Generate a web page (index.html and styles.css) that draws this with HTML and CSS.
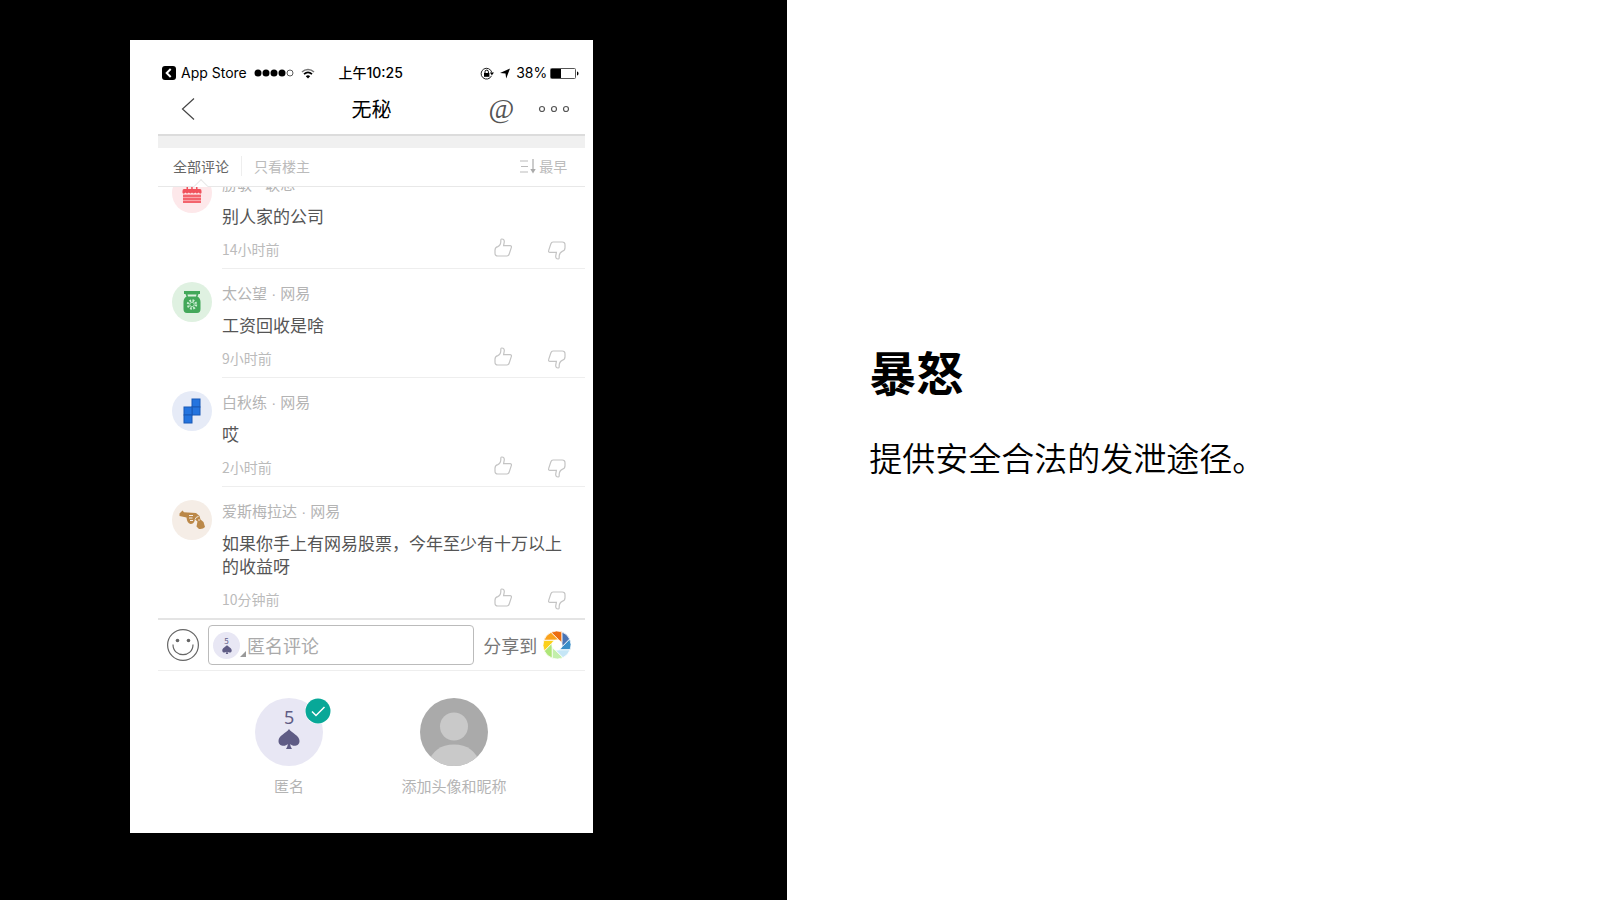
FILE: index.html
```html
<!DOCTYPE html>
<html lang="zh-CN">
<head>
    <meta charset="UTF-8">
    <meta name="viewport" content="width=device-width, initial-scale=1.0">
    <title>暴怒</title>
    <link rel="stylesheet" href="styles.css">
</head>
<body>

<!-- Shared icons -->
<svg class="sprite" aria-hidden="true">
    <symbol id="thumb" viewBox="0 0 18 19">
        <path d="M7.6 1C9.6.8 10.6 2.4 10.2 4.4L9.6 7.6H16C17.4 7.6 17.7 8.6 17.3 9.6L15.2 16C14.7 17.5 14.2 18 13 18H3.8C2 18 1 17 1 15.2V12.2C1 10.2 2.2 9 3.8 8.6C6 7.5 7 5.4 6.8 2.4C6.8 1.5 7 1.1 7.6 1Z" fill="none" stroke="currentColor" stroke-width="1.2"/>
    </symbol>
    <symbol id="spade" viewBox="0 0 22 20">
        <path d="M11 0C13.5 4 21.5 6.5 21.5 12C21.5 17.5 14.5 18 12.3 15C12.3 17 13 18.5 14 20H8C9 18.5 9.7 17 9.7 15C7.5 18 .5 17.5 .5 12C.5 6.5 8.5 4 11 0Z" fill="currentColor"/>
    </symbol>
</svg>

<div class="slide">
    <div class="stage">
        <div class="phone">

            <!-- Status bar -->
            <div class="status">
                <div class="status-left">
                    <svg width="14" height="14" viewBox="0 0 14 14"><rect width="14" height="14" rx="3"/><path d="M8.7 3L4.7 7L8.7 11" fill="none" stroke="#fff" stroke-width="2"/></svg>
                    <span class="store">App Store</span>
                    <svg width="40" height="8" viewBox="0 0 40 8"><circle cx="4" cy="4" r="3.5"/><circle cx="12" cy="4" r="3.5"/><circle cx="20" cy="4" r="3.5"/><circle cx="28" cy="4" r="3.5"/><circle cx="36" cy="4" r="3" fill="none" stroke="#333" stroke-width=".8"/></svg>
                    <svg width="14" height="11" viewBox="0 0 14 11"><path d="M1 4C4.5 .6 9.5 .6 13 4" fill="none" stroke="#777" stroke-width="1.5"/><path d="M3 6.2C5.5 4 8.5 4 11 6.2" fill="none" stroke="#000" stroke-width="1.7"/><path d="M4.8 8.2C6.2 7 7.8 7 9.2 8.2L7 10.5Z"/></svg>
                </div>
                <span class="clock">上午10:25</span>
                <div class="status-right">
                    <svg width="14" height="13" viewBox="0 0 14 13"><path d="M11.5 8.8A5.4 5.4 0 1 1 11.8 5.5" fill="none" stroke="#222" stroke-width="1"/><path d="M9.8 5.5H14L11.9 8.2Z"/><rect x="4" y="6" width="5.4" height="3.8"/><path d="M5 6V4.8A1.7 1.7 0 0 1 8.4 4.8V6" fill="none" stroke="#000"/></svg>
                    <svg width="10" height="11" viewBox="0 0 10 11"><path d="M10 .5L6.2 10.5L5.5 5.5L0 5Z"/></svg>
                    <span class="battery">38%
                        <svg width="29" height="11" viewBox="0 0 29 11"><rect x=".5" y=".5" width="25" height="10" rx="1" fill="none" stroke="#555"/><rect x="1" y="1" width="10" height="9"/><path d="M27 3.5C29 4 29 7 27 7.5Z"/></svg>
                    </span>
                </div>
            </div>

            <!-- Title bar -->
            <div class="nav">
                <button class="back" aria-label="返回">
                    <svg width="14" height="22" viewBox="0 0 14 22"><path d="M13 .5L1.5 11L13 21.5" fill="none" stroke="#444" stroke-width="1.2"/></svg>
                </button>
                <h2>无秘</h2>
                <div class="nav-right">
                    <button class="at">@</button>
                    <button aria-label="更多">
                        <svg width="32" height="8" viewBox="0 0 32 8"><g fill="none" stroke="#555" stroke-width="1.2"><circle cx="4" cy="4" r="2.5"/><circle cx="16" cy="4" r="2.5"/><circle cx="28" cy="4" r="2.5"/></g></svg>
                    </button>
                </div>
            </div>

            <!-- Tabs -->
            <div class="tabs">
                <button class="tab active">全部评论</button>
                <button class="tab">只看楼主</button>
                <button class="sort">
                    <svg width="16" height="15" viewBox="0 0 16 15"><path d="M0 2H8M1 7.5H8M0 13H8" fill="none" stroke="#bbb"/><path d="M13 0V11" fill="none" stroke="#aaa" stroke-width="1.2"/><path d="M10.3 10H15.7L13 14.5Z" fill="#aaa"/></svg>
                    最早
                </button>
            </div>

            <!-- Comments, scrolled to the newest -->
            <div class="comments">
                <div class="comment">
                    <div class="avatar pink">
                        <svg width="20" height="22" viewBox="0 0 20 22"><path d="M4.5 3H6V8H4.5ZM9.2 3H10.7V8H9.2ZM14 3H15.5V8H14Z" fill="#f0525c"/><path d="M2 7H18Q19.5 7 19.5 9V11Q18 12.5 16.5 10.5Q15 12.5 13.2 10.5Q11.5 12.5 10 10.5Q8.5 12.5 6.8 10.5Q5 12.5 3.5 10.5Q2 12.5 .5 11V9Q.5 7 2 7Z" fill="#f0525c"/><path d="M1 12.5H19V21H1Z" fill="#f3646d"/><path d="M1 12.5H19M1 15.5H19M1 18.5H19" stroke="#fbb5b9" stroke-width=".8"/></svg>
                    </div>
                    <div class="comment-body">
                        <div class="name">勝敏 · 联想</div>
                        <p>别人家的公司</p>
                        <div class="meta">
                            <span>14小时前</span>
                            <button aria-label="赞"><svg width="18" height="19"><use href="#thumb"/></svg></button>
                            <button class="down" aria-label="踩"><svg width="18" height="19"><use href="#thumb"/></svg></button>
                        </div>
                    </div>
                </div>
                <div class="comment">
                    <div class="avatar green">
                        <svg width="18" height="24" viewBox="0 0 18 24"><path d="M1 1H17V4H15.5L14.5 6.5Q17.5 8 17.5 12V19Q17.5 23 14 23H4Q.5 23 .5 19V12Q.5 8 3.5 6.5L2.5 4H1Z" fill="#43a85a"/><path d="M4.5 4.5H13.5L13 6.5H5Z" fill="#dff1e1"/><circle cx="9" cy="14.5" r="4" fill="none" stroke="#c8ecd0" stroke-width="2.4" stroke-dasharray="1.8 1.34"/><circle cx="9" cy="14.5" r="2.2" fill="none" stroke="#c8ecd0" stroke-width=".8"/></svg>
                    </div>
                    <div class="comment-body">
                        <div class="name">太公望 · 网易</div>
                        <p>工资回收是啥</p>
                        <div class="meta">
                            <span>9小时前</span>
                            <button aria-label="赞"><svg width="18" height="19"><use href="#thumb"/></svg></button>
                            <button class="down" aria-label="踩"><svg width="18" height="19"><use href="#thumb"/></svg></button>
                        </div>
                    </div>
                </div>
                <div class="comment">
                    <div class="avatar blue">
                        <svg width="18" height="26" viewBox="0 0 18 26"><g fill="#2474df" stroke="#1959b5"><rect x="9" y="1" width="8" height="8"/><rect x="9" y="9" width="8" height="8"/><rect x="1" y="9" width="8" height="8"/><rect x="1" y="17" width="8" height="8"/></g></svg>
                    </div>
                    <div class="comment-body">
                        <div class="name">白秋练 · 网易</div>
                        <p>哎</p>
                        <div class="meta">
                            <span>2小时前</span>
                            <button aria-label="赞"><svg width="18" height="19"><use href="#thumb"/></svg></button>
                            <button class="down" aria-label="踩"><svg width="18" height="19"><use href="#thumb"/></svg></button>
                        </div>
                    </div>
                </div>
                <div class="comment">
                    <div class="avatar tan">
                        <svg width="26" height="20" viewBox="0 0 26 20"><path d="M2 2L3.5 .5L5 2.3L17 3L20.5 6L21.5 9.5L24.5 12L26 17Q24 19.5 20 19L17.5 16.5L18.5 11.5L16 9.5Q15 14 11.5 14Q8 13 7.5 7.5L.5 6V3.5Z" fill="#bb8848"/><path d="M10 5.5H14M10 8H13.5M11 10.5H14M16 9.5Q17 6.5 19.5 6.5" fill="none" stroke="#f5ede6" stroke-width="1"/><circle cx="20" cy="10" r=".8" fill="#f5ede6"/></svg>
                    </div>
                    <div class="comment-body">
                        <div class="name">爱斯梅拉达 · 网易</div>
                        <p>如果你手上有网易股票，今年至少有十万以上的收益呀</p>
                        <div class="meta">
                            <span>10分钟前</span>
                            <button aria-label="赞"><svg width="18" height="19"><use href="#thumb"/></svg></button>
                            <button class="down" aria-label="踩"><svg width="18" height="19"><use href="#thumb"/></svg></button>
                        </div>
                    </div>
                </div>
            </div>

            <!-- Reply bar -->
            <div class="reply">
                <button aria-label="表情">
                    <svg width="32" height="32" viewBox="0 0 32 32"><g fill="none" stroke="#666" stroke-width="1.2"><circle cx="16" cy="16" r="15.4"/><path d="M6 15.5C6 29 26 29 26 15.5"/></g><circle cx="10.5" cy="11.5" r="1.8" fill="#666"/><circle cx="21.5" cy="11.5" r="1.8" fill="#666"/></svg>
                </button>
                <div class="reply-box">
                    <button class="identity" aria-label="切换身份">
                        <span>5</span>
                        <svg width="10" height="9"><use href="#spade"/></svg>
                    </button>
                    <svg class="corner" width="6" height="6" viewBox="0 0 6 6"><path d="M6 0V6H0Z" fill="#999"/></svg>
                    <input type="text" placeholder="匿名评论" aria-label="匿名评论">
                </div>
                <button class="share">分享到
                    <svg width="28" height="28" viewBox="-14 -14 28 28">
                        <g stroke="#fff" stroke-width=".7">
                            <path fill="#4a74b4" transform="rotate(20)" d="M0-14A14 14 0 0 1 9.9-9.9L5.5-.3L3.7-4.1Z"/>
                            <path fill="#3a8ec8" transform="rotate(65)" d="M0-14A14 14 0 0 1 9.9-9.9L5.5-.3L3.7-4.1Z"/>
                            <path fill="#c5e6f6" transform="rotate(110)" d="M0-14A14 14 0 0 1 9.9-9.9L5.5-.3L3.7-4.1Z"/>
                            <path fill="#c3efac" transform="rotate(155)" d="M0-14A14 14 0 0 1 9.9-9.9L5.5-.3L3.7-4.1Z"/>
                            <path fill="#aee678" transform="rotate(200)" d="M0-14A14 14 0 0 1 9.9-9.9L5.5-.3L3.7-4.1Z"/>
                            <path fill="#fbd01a" transform="rotate(245)" d="M0-14A14 14 0 0 1 9.9-9.9L5.5-.3L3.7-4.1Z"/>
                            <path fill="#faa21c" transform="rotate(290)" d="M0-14A14 14 0 0 1 9.9-9.9L5.5-.3L3.7-4.1Z"/>
                            <path fill="#ec6c10" transform="rotate(335)" d="M0-14A14 14 0 0 1 9.9-9.9L5.5-.3L3.7-4.1Z"/>
                        </g>
                    </svg>
                </button>
            </div>

            <!-- Identity picker -->
            <div class="picker">
                <button class="choice">
                    <span class="face card">
                        <span>5</span>
                        <svg width="22" height="20"><use href="#spade"/></svg>
                        <svg class="badge" width="26" height="26" viewBox="0 0 26 26"><circle cx="13" cy="13" r="13" fill="#fff"/><circle cx="13" cy="13" r="12.5" fill="#08a898"/><path d="M7 13.5L11 17.5L19.5 9" fill="none" stroke="#fff" stroke-width="1.5"/></svg>
                    </span>
                    匿名
                </button>
                <button class="choice">
                    <span class="face">
                        <svg width="68" height="68" viewBox="0 0 68 68"><clipPath id="round"><circle cx="34" cy="34" r="34"/></clipPath><g clip-path="url(#round)"><rect width="68" height="68" fill="#aaa"/><circle cx="34" cy="28.5" r="14" fill="#c9c9c9"/><ellipse cx="34" cy="64" rx="24" ry="17.5" fill="#c9c9c9"/></g></svg>
                    </span>
                    添加头像和昵称
                </button>
            </div>
        </div>
    </div>

    <div class="text">
        <h1>暴怒</h1>
        <p>提供安全合法的发泄途径。</p>
    </div>
</div>

</body>
</html>
```
FILE: styles.css
```css
* {
    box-sizing: border-box;
}
body {
    margin: 0;
    font-family: "Noto Sans CJK SC", sans-serif;
    color: #000;
    background-color: #fff;
}
h1, h2, p {
    margin: 0;
}
button {
    display: flex;
    align-items: center;
    padding: 0;
    border: none;
    background: none;
    font-family: inherit;
    color: inherit;
    cursor: pointer;
}
svg {
    display: block;
    flex-shrink: 0;
}
.sprite {
    position: absolute;
    width: 0;
    height: 0;
}
.slide {
    display: flex;
    min-height: 100vh;
}

/* Left half */
.stage {
    display: flex;
    flex: 0 0 49.2%;
    padding: 40px 194px 67px 130px;
    background-color: #000;
}
.phone {
    display: flex;
    flex: 1;
    flex-direction: column;
    padding: 22px 8px 0 28px;
    background-color: #fff;
}
.status {
    display: grid;
    grid-template-columns: 1fr auto 1fr;
    align-items: center;
    height: 22px;
    padding: 0 6px 0 4px;
    font-family: Inter, "Noto Sans CJK SC", sans-serif;
    font-size: 14px;
    line-height: 20px;
    white-space: nowrap;
}
.status-left, .status-right, .battery {
    display: flex;
    align-items: center;
}
.status-left {
    gap: 7px;
}
.store {
    margin-left: -2px;
}
.clock {
    font-weight: 500;
}
.status-right {
    justify-content: flex-end;
    gap: 6px;
}
.battery {
    gap: 3px;
}
.nav {
    display: grid;
    grid-template-columns: 1fr auto 1fr;
    align-items: center;
    height: 52px;
    padding: 0 15px;
    border-bottom: 2px solid #dcdcdc;
}
.back {
    padding-left: 8px;
}
.nav h2 {
    padding-bottom: 2px;
    font-size: 20px;
    font-weight: 400;
}
.nav-right {
    display: flex;
    justify-content: flex-end;
    align-items: center;
    gap: 24px;
}
.at {
    font-family: "Liberation Serif", serif;
    font-size: 28px;
    line-height: 28px;
    color: #555;
}
.tabs {
    display: flex;
    align-items: center;
    height: 51px;
    padding: 0 18px 2px 15px;
    border-top: 12px solid #f0f0f0;
    border-bottom: 1px solid #e8e8e8;
}
.tab, .sort {
    font-size: 14px;
    line-height: 20px;
    color: #bbb;
}
.tab + .tab {
    margin-left: 12px;
    padding-left: 12px;
    border-left: 1px solid #eee;
}
.tab.active {
    position: relative;
    color: #666;
}
.tab.active::after {
    content: "";
    position: absolute;
    left: 50%;
    bottom: -15px;
    width: 9px;
    height: 9px;
    border: solid #e8e8e8;
    border-width: 1px 0 0 1px;
    background-color: #fff;
    transform: translateX(-50%) rotate(45deg);
}
.sort {
    gap: 3px;
    margin-left: auto;
}

/* Comments */
.comments {
    position: relative;
    display: flex;
    flex: 1 1 0;
    flex-direction: column;
    justify-content: flex-end;
    min-height: 300px;
    overflow: hidden;
    background-color: #fff;
}
.comment {
    display: flex;
    flex-shrink: 0;
    gap: 10px;
    padding-left: 14px;
}
.avatar {
    display: flex;
    justify-content: center;
    align-items: center;
    flex-shrink: 0;
    width: 40px;
    height: 40px;
    margin-top: 13px;
    border-radius: 50%;
}
.pink {
    background-color: #fde8ea;
}
.green {
    background-color: #dff1e1;
}
.blue {
    background-color: #e6ebf7;
}
.tan {
    background-color: #f5ede6;
}
.comment-body {
    flex: 1;
    padding: 14px 19px 8px 0;
    border-bottom: 1px solid #eee;
}
.comment:last-child .comment-body {
    border-bottom: none;
}
.name {
    font-family: "Liberation Sans", "Noto Sans CJK SC", sans-serif;
    font-size: 15px;
    line-height: 22px;
    color: #b4b4b4;
}
.comment-body p {
    margin: 8px 0 11px;
    font-size: 17px;
    line-height: 23px;
    color: #555;
}
.meta {
    display: flex;
    gap: 36px;
    height: 22px;
    font-size: 14px;
    line-height: 22px;
    color: #bbb;
}
.meta span {
    flex: 1;
}
.meta button {
    align-items: flex-start;
    color: #c4c4c4;
}
.meta .down {
    align-items: flex-end;
}
.down svg {
    transform: rotate(180deg);
}

/* Reply bar */
.reply {
    display: flex;
    align-items: center;
    gap: 9px;
    height: 53px;
    padding: 0 14px 0 9px;
    border-top: 2px solid #e4e4e4;
    border-bottom: 1px solid #eee;
}
.reply-box {
    display: flex;
    align-items: center;
    flex: 1;
    height: 40px;
    padding: 0 4px;
    border: 1px solid #bbb;
    border-radius: 4px;
}
.identity {
    flex-direction: column;
    flex-shrink: 0;
    justify-content: center;
    width: 27px;
    height: 27px;
    border-radius: 50%;
    background-color: #e8e7f4;
    font-size: 8px;
    line-height: 8px;
    color: #5f5c85;
}
.corner {
    align-self: flex-end;
    margin-bottom: 7px;
}
.reply input {
    flex: 1;
    min-width: 0;
    padding: 0 1px;
    border: none;
    outline: none;
    font-family: inherit;
    font-size: 18px;
}
.reply input::placeholder {
    color: #aaa;
}
.share {
    gap: 6px;
    font-size: 18px;
    color: #777;
}

/* Identity picker */
.picker {
    display: grid;
    grid-template-columns: 165px 165px;
    justify-content: center;
    align-items: start;
    height: 162px;
    padding-top: 27px;
}
.choice {
    flex-direction: column;
    gap: 9px;
    font-size: 15px;
    line-height: 22px;
    color: #b4b4b4;
}
.face {
    position: relative;
    width: 68px;
    height: 68px;
}
.card {
    display: flex;
    flex-direction: column;
    align-items: center;
    gap: 2px;
    padding-top: 9px;
    border-radius: 50%;
    background-color: #e8e7f4;
    font-family: "Noto Sans", sans-serif;
    font-size: 18px;
    line-height: 20px;
    color: #5f5c85;
}
.badge {
    position: absolute;
    top: 0;
    right: -8px;
}

/* Right half */
.text {
    display: flex;
    flex: 1;
    flex-direction: column;
    justify-content: center;
    gap: 32px;
    padding: 0 82px 78px;
}
.text h1 {
    font-size: 47px;
    line-height: 60px;
}
.text p {
    font-size: 33px;
    font-weight: 350;
    line-height: 48px;
}
```
